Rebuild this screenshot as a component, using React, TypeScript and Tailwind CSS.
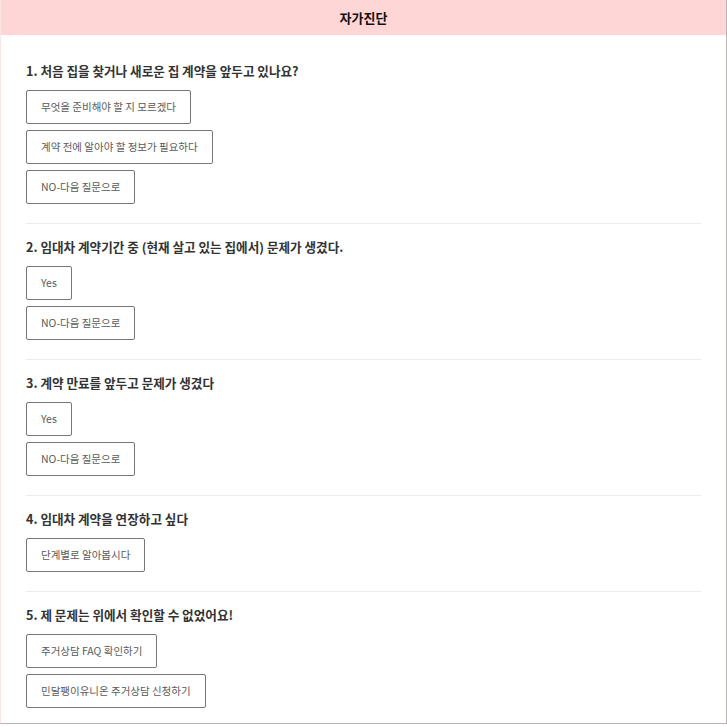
import React from "react"

type Question = {
  title: string
  options: string[]
}

const questions: Question[] = [
  {
    title: "1. 처음 집을 찾거나 새로운 집 계약을 앞두고 있나요?",
    options: ["무엇을 준비해야 할 지 모르겠다", "계약 전에 알아야 할 정보가 필요하다", "NO-다음 질문으로"],
  },
  {
    title: "2. 임대차 계약기간 중 (현재 살고 있는 집에서) 문제가 생겼다.",
    options: ["Yes", "NO-다음 질문으로"],
  },
  {
    title: "3. 계약 만료를 앞두고 문제가 생겼다",
    options: ["Yes", "NO-다음 질문으로"],
  },
  {
    title: "4. 임대차 계약을 연장하고 싶다",
    options: ["단계별로 알아봅시다"],
  },
  {
    title: "5. 제 문제는 위에서 확인할 수 없었어요!",
    options: ["주거상담 FAQ 확인하기", "민달팽이유니온 주거상담 신청하기"],
  },
]

export default function App() {
  return (
    <div
      className="w-[727px] h-[727px] bg-white"
      style={{ fontFamily: '"Noto Sans CJK KR", "Noto Sans", sans-serif' }}
    >
      <div className="w-[727px] h-[724px] bg-white border-l border-l-[#fbe6e6] border-r border-b border-[#b9b4b4] flex flex-col">
        {/* Header */}
        <header className="h-[35px] bg-[#ffd6d6] flex items-center justify-center">
          <h1 className="text-[13px] font-bold text-[#111] leading-none">자가진단</h1>
        </header>

        {/* Questions */}
        <main className="pl-[25px] pr-[25px] pt-[13px]">
          {questions.map((q, i) => (
            <section
              key={i}
              className={`pt-[14px] ${i < questions.length - 1 ? "pb-[19px] border-b border-[#ececec]" : ""}`}
            >
              <h2 className="text-[12.6px] font-bold text-[#333] leading-[18px] mb-[10px]">{q.title}</h2>
              <div className="flex flex-col items-start gap-[6px]">
                {q.options.map((opt) => (
                  <button
                    key={opt}
                    className="h-[34px] px-[14px] border border-[#777] rounded-[2px] bg-white text-[10.5px] text-[#5a5a5a] leading-none"
                  >
                    {opt}
                  </button>
                ))}
              </div>
            </section>
          ))}
        </main>
      </div>
    </div>
  )
}
